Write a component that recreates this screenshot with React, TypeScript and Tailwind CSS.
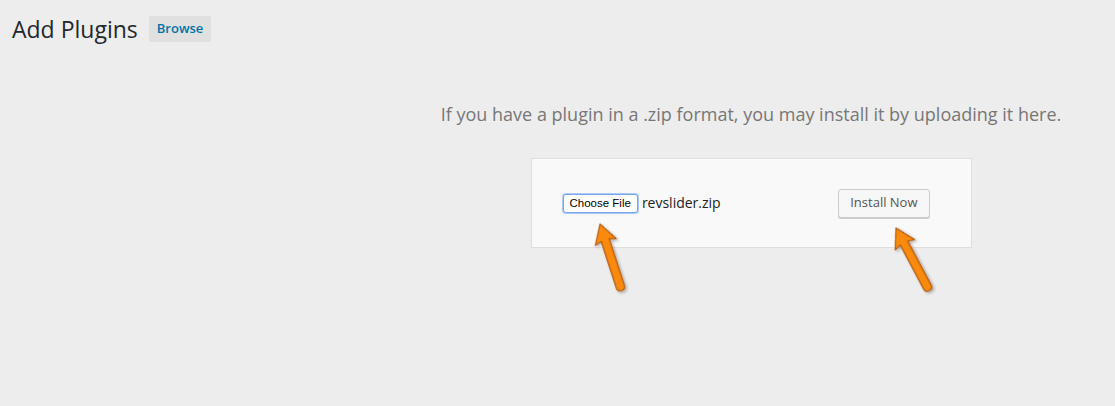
import React from 'react';

// arrow pointing up, tip at origin, tail at (0, len)
function Arrow({ x, y, angle, len }: { x: number; y: number; angle: number; len: number }) {
  const d = `M0 0 L11 19 L4.2 17 L4.2 ${len - 4} Q4.2 ${len} 0 ${len} Q-4.2 ${len} -4.2 ${len - 4} L-4.2 17 L-11 19 Z`;
  return (
    <g transform={`translate(${x} ${y}) rotate(${angle})`}>
      <path
        d={d}
        fill="#f98a10"
        stroke="#b0560c"
        strokeWidth="1.2"
        strokeLinejoin="round"
        filter="url(#arrowShadow)"
      />
    </g>
  );
}

export default function App() {
  return (
    <div className="relative w-[1115px] h-[406px] bg-[#ededed] font-['Open_Sans',sans-serif] overflow-hidden">
      <div className="flex items-center gap-[11px] pl-[12px] pt-[13px]">
        <h1 className="text-[23px] leading-[32px] text-[#23282d]">Add Plugins</h1>
        <button className="h-[26px] px-[8px] bg-[#e0e0e0] text-[#0073aa] text-[13px] font-semibold rounded-[2px]">
          Browse
        </button>
      </div>

      <div className="flex flex-col items-center pl-[387px] pt-[56px]">
        <p className="text-[18px] leading-[26px] text-[#777]">
          If you have a plugin in a .zip format, you may install it by uploading it here.
        </p>
        <div className="mt-[31px] w-[441px] h-[90px] bg-[#f9f9f9] border border-[#dedede] flex items-center pl-[31px] pr-[41px]">
          <div className="flex items-center mt-[1px]">
            <button className="h-[19px] px-[6px] bg-white border border-[#79a8ec] rounded-[3px] shadow-[0_0_0_1px_#a7c7f5] text-[11.5px] leading-none text-black font-['Liberation_Sans',sans-serif]">
              Choose File
            </button>
            <span className="ml-[4px] text-[14px] text-[#222] -mt-[3px]">revslider.zip</span>
          </div>
          <button className="ml-auto h-[29px] px-[11px] bg-[#f7f7f7] border border-[#ccc] rounded-[3px] shadow-[0_1px_0_#ccc] text-[13px] text-[#555]">
            Install Now
          </button>
        </div>
      </div>

      <svg className="absolute inset-0 pointer-events-none" width="1115" height="406">
        <defs>
          <filter id="arrowShadow" x="-50%" y="-50%" width="200%" height="200%">
            <feDropShadow dx="1" dy="2" stdDeviation="1.5" floodColor="#000" floodOpacity="0.3" />
          </filter>
        </defs>
        <Arrow x={600} y={224} angle={-18} len={70} />
        <Arrow x={896} y={228} angle={-28} len={71} />
      </svg>
    </div>
  );
}
